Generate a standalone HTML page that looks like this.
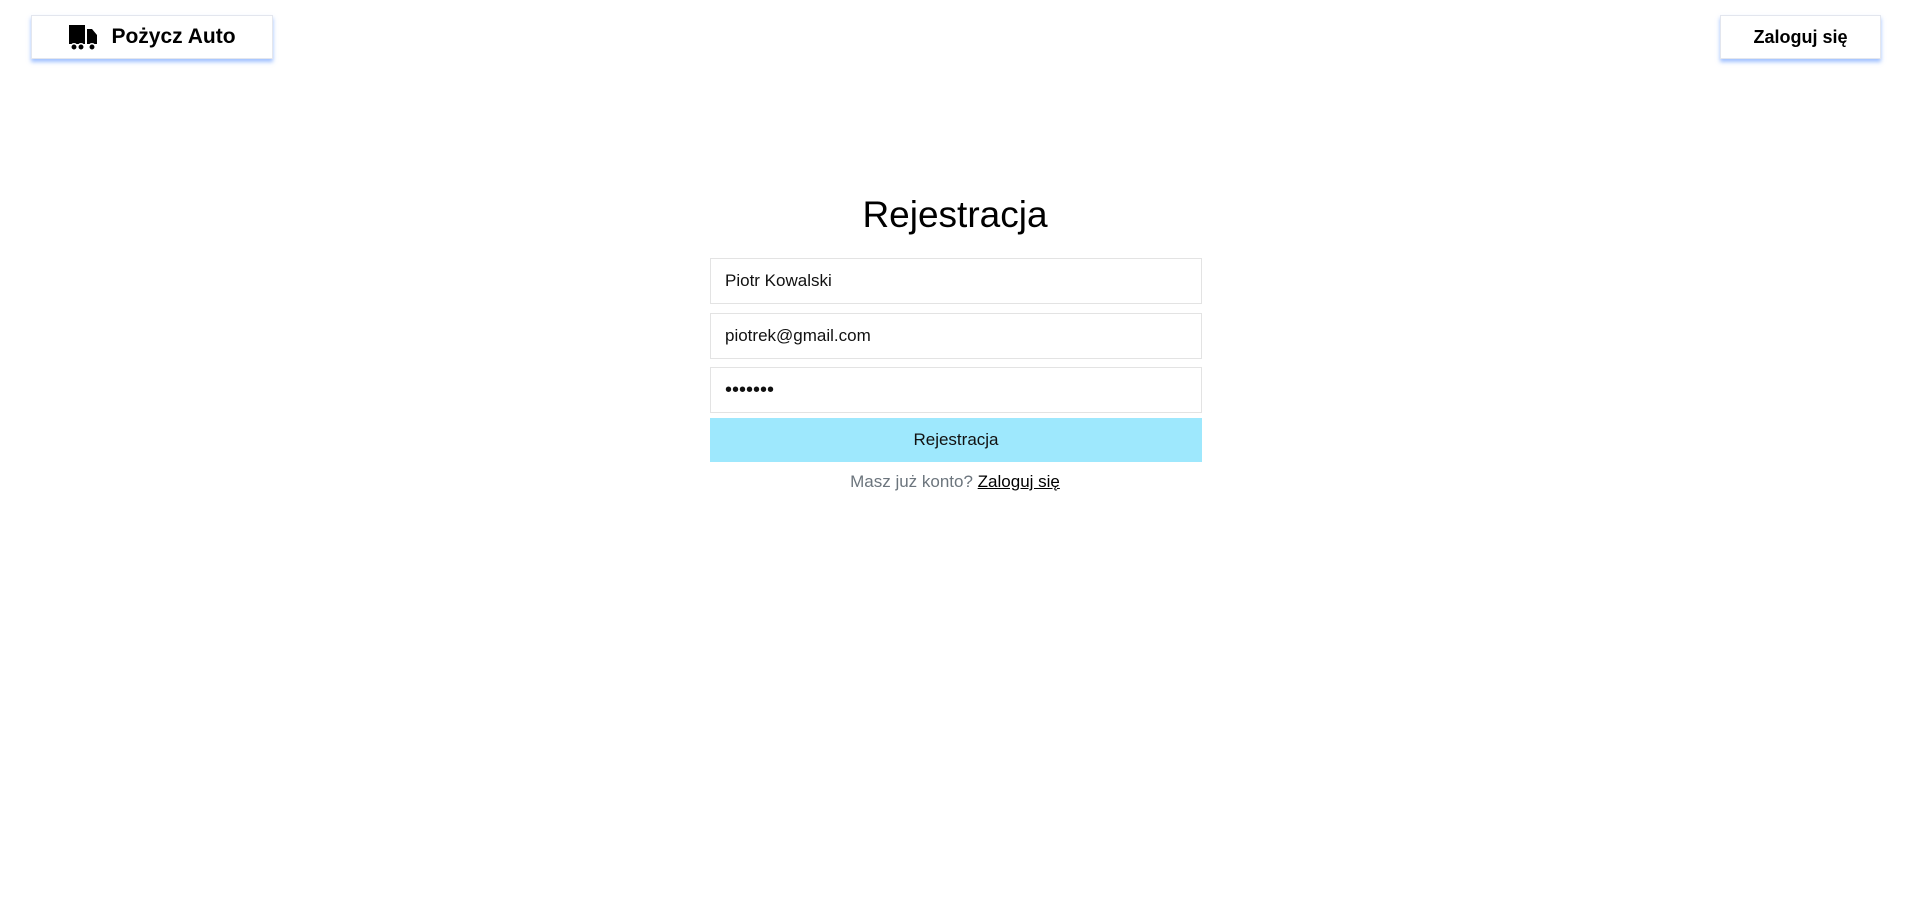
<!DOCTYPE html>
<html><head><meta charset="utf-8"><style>
body{margin:0;width:1910px;height:911px;background:#fff;font-family:"Segoe UI","Liberation Sans",sans-serif;position:relative;overflow:hidden}
.nb{position:absolute;top:15px;height:44px;background:#fff;border:1px solid #e3e6ee;box-shadow:0 3px 4px rgba(80,140,255,.55);box-sizing:border-box;display:flex;align-items:center;justify-content:center;font-weight:bold;color:#000}
.in{position:absolute;left:710px;width:492px;height:46px;border:1px solid #e3e3e3;box-sizing:border-box;padding-left:14px;font-size:17px;line-height:44px;color:#111}
</style></head><body>
<div class="nb" style="left:31px;width:242px;font-size:21px">
<svg width="30" height="28" viewBox="0 0 30 28" style="margin-right:13px"><path d="M1 2h16v19H1z" fill="#000"/><path d="M19 6h5l5 6v9H19z" fill="#000"/><circle cx="6" cy="24" r="3.2" fill="#000" stroke="#fff" stroke-width="1.5"/><circle cx="13" cy="24" r="3.2" fill="#000" stroke="#fff" stroke-width="1.5"/><circle cx="24" cy="24" r="3.2" fill="#000" stroke="#fff" stroke-width="1.5"/></svg>Pożycz Auto</div>
<div class="nb" style="left:1720px;width:161px;font-size:18px">Zaloguj się</div>
<div style="position:absolute;left:0;width:1910px;top:194px;text-align:center;font-size:37px;color:#000">Rejestracja</div>
<div class="in" style="top:258px">Piotr Kowalski</div>
<div class="in" style="top:313px">piotrek@gmail.com</div>
<div class="in" style="top:367px;font-size:20px;letter-spacing:0">•••••••</div>
<div style="position:absolute;left:710px;top:418px;width:492px;height:44px;background:#9ee8fd;text-align:center;line-height:44px;font-size:17px;color:#111">Rejestracja</div>
<div style="position:absolute;left:0;width:1910px;top:472px;text-align:center;font-size:17px;color:#6c757d">Masz już konto? <span style="color:#000;text-decoration:underline">Zaloguj się</span></div>
</body></html>
